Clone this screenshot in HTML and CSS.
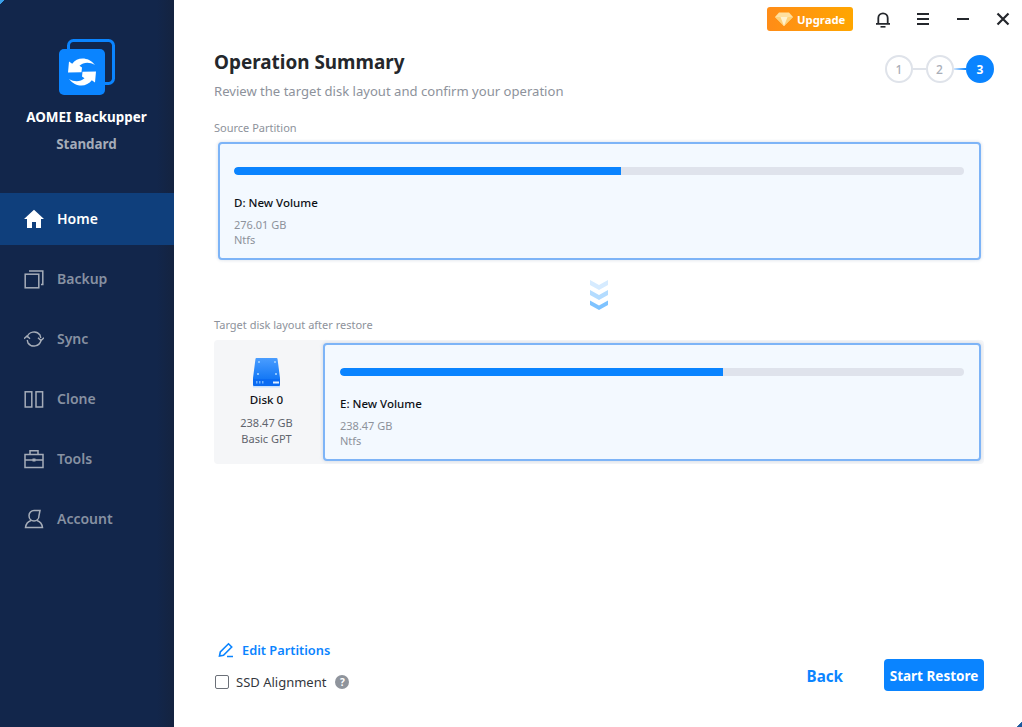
FILE: index.html
```html
<!DOCTYPE html>
<html lang="en">
<head>
<meta charset="utf-8">
<title>AOMEI Backupper</title>
<link rel="stylesheet" href="styles.css">
</head>
<body>
<div class="app">
  <aside class="sidebar">
    <div class="brand">
      <svg class="logo" width="56" height="56" viewBox="0 0 56 56">
        <path d="M9.500 10V6.500a5 5 0 0 1 5-5h35a5 5 0 0 1 5 5v33a5 5 0 0 1-5 5H46" fill="none" stroke="#0a84ff" stroke-width="3"/>
        <rect x="0" y="10" width="46" height="46" rx="5" fill="#0a84ff"/>
        <g id="sync-arrows" fill="#fff">
          <path d="M10 22.500l3.200 2.200C18 18 29 17 36 26c-5.500-3.200-11.500-3-15.500 .8l2.500 1.700-.5 4.800L9 33.500z"/>
          <path d="M36 43.500l-3.200-2.200C28 48 17 49 10 40c5.500 3.200 11.500 3 15.500-.8L23 37.500l.5-4.800L37 32.500z"/>
        </g>
      </svg>
      <div class="brand-name">AOMEI Backupper</div>
      <div class="brand-edition">Standard</div>
    </div>
    <nav class="nav">
      <a class="nav-item active">
        <svg class="nav-icon" viewBox="0 0 20 20"><path d="M10 .8L0 10h3v9h5v-6h4v6h5v-9h3z" fill="#fff"/></svg>
        <span class="nav-text">Home</span>
      </a>
      <a class="nav-item">
        <svg class="nav-icon" viewBox="0 0 20 20" fill="none" stroke="#a6adb9" stroke-width="1.500"><rect x="1.200" y="5.200" width="13.600" height="13.600"/><path d="M5 2h13.800v13.500H17"/></svg>
        <span class="nav-text">Backup</span>
      </a>
      <a class="nav-item">
        <svg class="nav-icon" viewBox="0 0 20 20" fill="none" stroke="#a6adb9" stroke-width="1.400"><path d="M3 8.500a7.300 7.300 0 0 1 13-2.500l.8 3"/><path d="M17 11.500a7.300 7.300 0 0 1-13 2.500l-.8-3"/><path d="M0 10.500l3-2.800 3 2.800M14 9.500l3 2.800 3-2.800" transform="translate(0 -.8)"/></svg>
        <span class="nav-text">Sync</span>
      </a>
      <a class="nav-item">
        <svg class="nav-icon" viewBox="0 0 20 20" fill="none" stroke="#a6adb9" stroke-width="1.500"><rect x="1.200" y="2.800" width="6.600" height="15.200"/><rect x="12" y="2.800" width="6.600" height="15.200"/></svg>
        <span class="nav-text">Clone</span>
      </a>
      <a class="nav-item">
        <svg class="nav-icon" viewBox="0 0 20 20" fill="none" stroke="#a6adb9" stroke-width="1.500"><rect x="1" y="5.500" width="18" height="13"/><path d="M6 5.500V1.800h8v3.700M1 11h18"/><rect x="8.500" y="9.500" width="3" height="3" fill="#a6adb9" stroke="none"/></svg>
        <span class="nav-text">Tools</span>
      </a>
      <a class="nav-item">
        <svg class="nav-icon" viewBox="0 0 20 20" fill="none" stroke="#a6adb9" stroke-width="1.500"><path d="M16 1.500H10a5 5 0 0 0-5 5c0 3 2 5.500 5 5.500s5-2.500 5-5.500z"/><path d="M7 11.500c-3 1-5 3-5.500 7h17c-.5-4-2.500-6-5.500-7"/></svg>
        <span class="nav-text">Account</span>
      </a>
    </nav>
  </aside>

  <main class="main">
    <header class="topbar">
      <button class="upgrade">
        <svg width="18" height="14" viewBox="0 0 18 14"><path d="M4 .5h10L18 5 9 14 0 5z" fill="#ffe0a0"/><path d="M0 5h18L9 14z" fill="#ffd27a"/><path d="M5.500 5L9 14l3.500-9z" fill="#fff2d0"/></svg>
        <span>Upgrade</span>
      </button>
      <div class="win-controls">
        <svg class="win" width="16" height="17" viewBox="0 0 16 17" fill="none" stroke="#24272c" stroke-width="1.800"><path d="M1 12.800h14M3.300 12.800V7a4.700 4.700 0 0 1 9.400 0v5.800"/><path d="M5.500 15.800h5" stroke-width="1.600"/></svg>
        <svg class="win" width="14" height="12" viewBox="0 0 14 12" fill="none" stroke="#24272c" stroke-width="2"><path d="M1 1h12M1 6h12M1 11h12"/></svg>
        <svg class="win" width="14" height="12" viewBox="0 0 14 12" fill="none" stroke="#24272c" stroke-width="2"><path d="M1 6h12"/></svg>
        <svg class="win" width="14" height="14" viewBox="0 0 14 14" fill="none" stroke="#24272c" stroke-width="2.200"><path d="M1.500 1.500l11 11M12.500 1.500l-11 11"/></svg>
      </div>
    </header>

    <section class="heading">
      <div class="heading-text">
        <h1>Operation Summary</h1>
        <p>Review the target disk layout and confirm your operation</p>
      </div>
      <ol class="steps">
        <li class="step">1</li>
        <li class="link"></li>
        <li class="step">2</li>
        <li class="link link-active"></li>
        <li class="step step-active">3</li>
      </ol>
    </section>

    <div class="label label-source">Source Partition</div>
    <div class="source-wrap">
      <div class="card">
        <div class="bar"><div class="bar-fill" style="width:53%"></div></div>
        <div class="vol-name">D: New Volume</div>
        <div class="vol-meta">276.01 GB<br>Ntfs</div>
      </div>
    </div>

    <div class="arrows">
      <svg width="20" height="30" viewBox="0 0 20 30">
        <path d="M1 0l9 5 9-5v5l-9 5-9-5z" fill="#d6ebff"/>
        <path d="M1 10l9 5 9-5v5l-9 5-9-5z" fill="#b4dcff"/>
        <path d="M1 20.500l9 5 9-5v4.500l-9 5-9-5z" fill="#7fc3ff"/>
      </svg>
    </div>

    <div class="label label-target">Target disk layout after restore</div>
    <div class="target">
      <div class="disk">
        <svg class="disk-icon" width="27" height="30" viewBox="0 0 27 30">
          <defs><linearGradient id="dg" x1="0" y1="0" x2="0" y2="1"><stop offset="0" stop-color="#4a9dff"/><stop offset="1" stop-color="#1478f5"/></linearGradient></defs>
          <path d="M0 27h27v2.500H0z" fill="#9ccbff" opacity=".5"/>
          <path d="M3.500 0h20a1 1 0 0 1 1 .8L27 20v1H0v-1L2.500 .8a1 1 0 0 1 1-.8z" fill="url(#dg)"/>
          <path d="M0 21h27v6a1 1 0 0 1-1 1H1a1 1 0 0 1-1-1z" fill="#0a6bf2"/>
          <path d="M5 3h2v2H5zM21 3h2v2h-2zM4 15h2v2H4zM22 15h2v2h-2z" fill="#8cc4ff"/>
          <rect x="20" y="23.500" width="6" height="2" fill="#e2f0ff"/>
          <path d="M3 23h1.500v2.500H3zM6 23h1.500v2.500H6zM9 23h1.500v2.500H9z" fill="#6fb2ff"/>
        </svg>
        <div class="disk-name">Disk 0</div>
        <div class="disk-meta">238.47 GB<br>Basic GPT</div>
      </div>
      <div class="card card-target">
        <div class="bar"><div class="bar-fill" style="width:61.400%"></div></div>
        <div class="vol-name">E: New Volume</div>
        <div class="vol-meta">238.47 GB<br>Ntfs</div>
      </div>
    </div>

    <footer class="footer">
      <div class="footer-left">
        <a class="edit">
          <svg width="16" height="16" viewBox="0 0 16 16" fill="none" stroke="#0a84ff" stroke-width="1.600"><path d="M1.500 14l.8-4L10.500 1.800l3.200 3.200L5.500 13.200zM9 14.500h6"/></svg>
          <span>Edit Partitions</span>
        </a>
        <label class="ssd">
          <span class="check"></span>
          <span>SSD Alignment</span>
          <span class="help">?</span>
        </label>
      </div>
      <div class="footer-right">
        <a class="back">Back</a>
        <button class="start">Start Restore</button>
      </div>
    </footer>
  </main>
</div>
</body>
</html>
```
FILE: styles.css
```css
* { box-sizing: border-box; }
html, body { margin: 0; padding: 0; height: 100%; }
body { font-family: "Noto Sans", "Open Sans", sans-serif; background: #fff; overflow: hidden; }
ol { list-style: none; margin: 0; padding: 0; }
.app { position: relative; display: flex; width: 1022px; height: 727px; overflow: hidden; }
.app::before { content: ""; position: absolute; left: 0; top: 0; width: 5px; height: 5px; background: linear-gradient(135deg, #3a9fe8 0%, #3a9fe8 45%, transparent 50%); }
.app::after { content: ""; position: absolute; right: 0; bottom: 0; width: 6px; height: 5px; background: linear-gradient(135deg, transparent 50%, #1a5a9e 55%, #1a5a9e 100%); }

.sidebar { width: 174px; flex: none; background: linear-gradient(90deg, #12264b 0%, #12264b 90%, #142340 100%); display: flex; flex-direction: column; }
.brand { height: 193px; padding-top: 39px; display: flex; flex-direction: column; align-items: center; }
.logo { display: block; }
.brand-name { margin-top: 13px; margin-left: -1px; font-size: 13.450px; line-height: 19px; font-weight: 700; color: #fff; }
.brand-edition { margin-top: 8px; margin-left: -1px; font-size: 13.400px; line-height: 18px; font-weight: 700; color: #a5acb8; }
.nav { display: flex; flex-direction: column; gap: 8px; }
.nav-item { height: 52px; display: flex; align-items: center; gap: 13px; padding-left: 24px; font-size: 14px; font-weight: 600; color: #8791a2; }
.nav-item.active { background: #0f3f7c; color: #fff; }
.nav-icon { width: 20px; height: 20px; flex: none; }
.nav-text { padding-bottom: 2px; }

.main { flex: 1; min-width: 0; display: flex; flex-direction: column; padding: 0 38px 35px 40px; }
.topbar { height: 38px; display: flex; align-items: center; justify-content: flex-end; margin-right: -39px; }
.upgrade { width: 86px; height: 24px; border: 0; border-radius: 3px; background: linear-gradient(90deg, #ff8c17, #ffa600); color: #fff; font: 700 11.300px "Noto Sans", sans-serif; display: flex; align-items: center; gap: 4px; padding: 0 0 0 8px; }
.win-controls { display: grid; grid-template-columns: repeat(4, 40px); justify-items: center; align-items: center; margin-left: 10px; }
.win { display: block; }

.heading { display: flex; justify-content: space-between; align-items: flex-start; height: 68px; padding-top: 10px; }
h1 { margin: 0; font-size: 18.900px; line-height: 28px; font-weight: 700; color: #24272c; }
.heading-text p { margin: 6px 0 0; font-size: 13.080px; line-height: 18px; color: #8d929b; }
.steps { display: flex; align-items: center; margin-right: -10px; margin-top: 7px; }
.step { width: 28px; height: 28px; border-radius: 50%; border: 2px solid #dfe3ea; font-size: 12px; font-weight: 500; color: #a9aeb8; display: flex; align-items: center; justify-content: center; }
.step-active { background: #0a84ff; border-color: #0a84ff; color: #fff; font-weight: 700; }
.link { width: 12.500px; height: 2px; background: #dfe3ea; }
.link-active { background: linear-gradient(90deg, #cfe6ff, #0a84ff); }

.label { font-size: 11px; line-height: 16px; color: #8d929b; }
.label-source { margin-top: 14px; }
.source-wrap { margin-top: 6px; padding: 0 3px 0 4px; }
.card { height: 118px; border: 2px solid #7db4f7; border-radius: 4px; background: #f3f9ff; box-shadow: 0 0 3px 1px rgba(130, 150, 180, .2); padding: 23px 15px 0 14px; }
.bar { height: 8px; border-radius: 4px; background: #dfe3ec; overflow: hidden; }
.bar-fill { height: 100%; border-radius: 4px 0 0 4px; background: #0a84ff; }
.vol-name { margin-top: 19px; font-size: 11.500px; line-height: 17px; font-weight: 500; color: #0e1116; }
.vol-meta { margin-top: 6px; font-size: 11px; line-height: 15px; color: #8d929b; }

.arrows { height: 50px; padding-top: 20px; display: flex; justify-content: center; }
.arrows svg { display: block; }
.label-target { margin-top: 7px; }
.target { margin-top: 7px; height: 124px; width: 770px; background: #f5f6f8; border-radius: 4px; display: flex; align-items: center; padding-right: 3px; }
.disk { width: 105px; flex: none; display: flex; flex-direction: column; align-items: center; }
.disk-icon { display: block; }
.disk-name { margin-top: 3px; font-size: 11.600px; line-height: 17px; font-weight: 500; color: #0e1116; }
.disk-meta { margin-top: 7px; font-size: 11px; line-height: 16px; color: #5f646d; text-align: center; }
.card-target { flex: 1; margin-left: 4px; padding-left: 15px; }

.footer { margin-top: auto; display: flex; justify-content: space-between; align-items: flex-end; }
.footer-left { display: flex; flex-direction: column; gap: 12px; }
.edit { display: flex; align-items: center; gap: 8px; margin-left: 4px; font-size: 12.800px; line-height: 20px; font-weight: 600; color: #0a84ff; }
.ssd { display: flex; align-items: center; margin-left: 1px; font-size: 13px; line-height: 20px; color: #33373d; }
.check { width: 14px; height: 14px; border: 1.500px solid #6b7078; border-radius: 2px; background: #fff; margin-right: 7px; }
.help { width: 14px; height: 14px; border-radius: 50%; background: #8f949c; color: #fff; font-size: 10px; line-height: 14px; font-weight: 700; text-align: center; margin-left: 9px; }
.footer-right { display: flex; align-items: center; gap: 41px; margin-bottom: 1px; }
.back { padding-top: 2px; font-size: 15.200px; font-weight: 700; color: #0a84ff; }
.start { width: 100px; height: 32px; border: 0; border-radius: 4px; background: #0a84ff; color: #fff; font: 700 13.500px "Noto Sans", sans-serif; padding: 2px 0 0; }
```
